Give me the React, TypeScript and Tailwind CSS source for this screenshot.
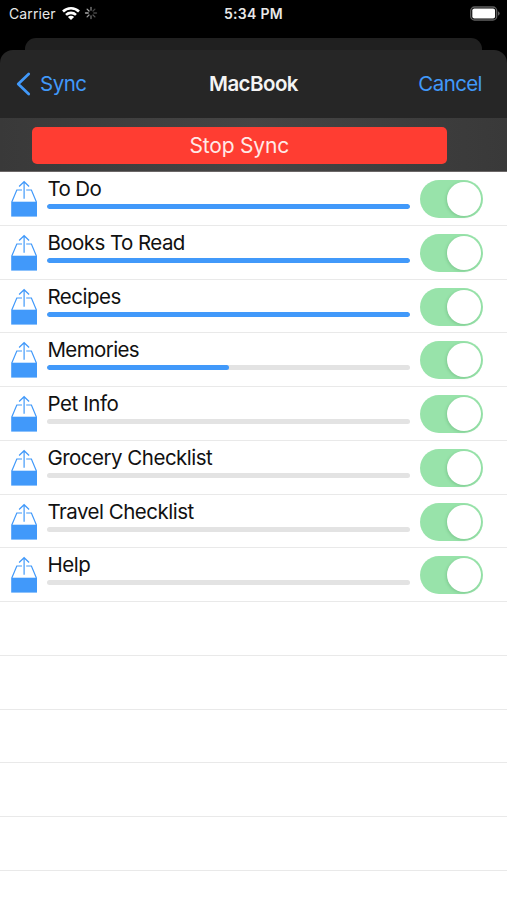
import React from 'react';

const lists = [
  { name: 'To Do', progress: 100, tracking: 'tracking-[-0.6px]' },
  { name: 'Books To Read', progress: 100, tracking: 'tracking-[-0.55px]' },
  { name: 'Recipes', progress: 100, tracking: 'tracking-[-0.5px]' },
  { name: 'Memories', progress: 50, tracking: 'tracking-[-0.6px]' },
  { name: 'Pet Info', progress: 0, tracking: 'tracking-[-0.4px]' },
  { name: 'Grocery Checklist', progress: 0, tracking: 'tracking-[-0.5px]' },
  { name: 'Travel Checklist', progress: 0, tracking: 'tracking-[-0.5px]' },
  { name: 'Help', progress: 0, tracking: 'tracking-[-0.45px]' },
];

function StatusBar() {
  return (
    <div className="grid h-[28px] grid-cols-3 items-center px-[9px] text-[14px] leading-none text-[#e8e8e8]">
      <div className="flex items-center">
        <span className="w-[47px] whitespace-nowrap text-[14px] tracking-[0.1px]">Carrier</span>
        <svg className="ml-[5px] h-[15px] w-[20px] -translate-y-px" viewBox="0 0 20 15" fill="none" stroke="#fff" strokeWidth="2.6">
          <path d="M2 5.5a11.5 11.5 0 0 1 16 0M5 8.9a7.2 7.2 0 0 1 10 0" />
          <path d="M10 14 6.9 11a4.4 4.4 0 0 1 6.2 0z" fill="#fff" stroke="none" />
        </svg>
        <svg className="ml-[3px] h-[14px] w-[14px] -translate-y-px" viewBox="0 0 14 14" stroke="#aaa" strokeWidth="1.3" strokeLinecap="round">
          <path d="M7 1.5v2.7" opacity=".75" />
          <path d="m10.9 3.1-1.9 1.9" opacity=".4" />
          <path d="M12.5 7H9.8" opacity=".4" />
          <path d="M10.9 10.9 9 9" opacity=".5" />
          <path d="M7 12.5V9.8" opacity=".65" />
          <path d="M3.1 10.9 5 9" opacity=".9" />
          <path d="M1.5 7h2.7" />
          <path d="M3.1 3.1 5 5" />
        </svg>
      </div>
      <span className="whitespace-nowrap text-center font-semibold tracking-[0.3px]">5:34 PM</span>
      <svg className="-mr-[3px] h-[15px] w-[32px] -translate-y-px justify-self-end" viewBox="0 0 32 15">
        <rect x="1.7" y="1" width="26" height="13" rx="3.8" fill="none" stroke="#606060" strokeWidth="1.3" />
        <rect x="3.3" y="2.6" width="22.8" height="9.8" rx="2" fill="#fff" />
        <path d="M29 5.3q1.7.7 1.7 2.2T29 9.7z" fill="#606060" />
      </svg>
    </div>
  );
}

function OutboxIcon() {
  return (
    <svg className="ml-[11px] mt-[8px] h-[37px] w-[27px] shrink-0" viewBox="0 0 27 37" fill="none" stroke="#4199fa" strokeWidth="1.2">
      <path d="M.2 21.7h25.8v14.9H.2z" fill="#4199fa" stroke="none" />
      <path d="M.8 22 5.8 10h5.2M15.2 10h5.2L25.4 22" />
      <path d="M13.1 18.8V1.7M8.1 6.5l5-4.8 5 4.8" />
    </svg>
  );
}

function Toggle() {
  return (
    <div className="ml-[10px] mt-[8px] flex h-[38px] w-[62.5px] shrink-0 items-center justify-end rounded-full bg-[#98e3aa] pr-[2px]">
      <div className="h-[34px] w-[34px] rounded-full bg-white shadow-[-1px_1px_3px_rgba(40,120,60,0.22)]" />
    </div>
  );
}

export default function App() {
  return (
    <div className="flex h-[900px] w-[507px] flex-col overflow-hidden bg-black font-['Inter','Liberation_Sans',sans-serif]">
      <StatusBar />
      <div className="mx-[25px] mt-[10px] h-[12px] shrink-0 rounded-t-[11px] bg-[#202020]" />
      <header className="grid h-[68px] shrink-0 grid-cols-3 items-center rounded-t-[13px] bg-[#262626] text-[20.5px] text-[#4199fa]">
        <div className="flex items-center pl-[16px]">
          <svg className="h-[24px] w-[15px]" viewBox="0 0 15 24" fill="none" stroke="currentColor" strokeWidth="2.7" strokeLinecap="round" strokeLinejoin="round">
            <path d="M12.7 2 2.2 12l10.5 10" />
          </svg>
          <span className="ml-[9px] tracking-[-0.5px]">Sync</span>
        </div>
        <h1 className="text-center font-semibold tracking-[-0.55px] text-[#f4f4f4]">MacBook</h1>
        <span className="pr-[25px] text-right tracking-[-0.6px]">Cancel</span>
      </header>
      <div className="h-[54px] shrink-0 border-b border-[#6b6767] bg-linear-to-r from-[#393939] via-[#454545] to-[#393939] pl-[31.5px] pt-[8.5px]">
        <button className="flex h-[37px] w-[415.5px] items-center justify-center rounded-[5px] bg-[#ff3d32] pt-[1px] text-[21px] tracking-[-0.2px] text-[#ffe9e6]">
          Stop Sync
        </button>
      </div>
      <main className="flex-1 overflow-hidden bg-white">
        {lists.map((list) => (
          <div key={list.name} className="flex h-[53.75px] border-b border-[#e9e9e9]">
            <OutboxIcon />
            <div className="ml-[9.4px] w-[363px] shrink-0 pt-[3px]">
              <div className={`h-[29px] text-[20.5px] leading-[28px] text-[#111] ${list.tracking}`}>{list.name}</div>
              <div className="h-[5px] overflow-hidden rounded-full bg-[#e3e3e3]">
                <div className="h-full rounded-full bg-[#4199fa]" style={{ width: `${list.progress}%` }} />
              </div>
            </div>
            <Toggle />
          </div>
        ))}
        {[0, 1, 2, 3, 4, 5].map((row) => (
          <div key={row} className="h-[53.75px] border-b border-[#e9e9e9]" />
        ))}
      </main>
    </div>
  );
}
